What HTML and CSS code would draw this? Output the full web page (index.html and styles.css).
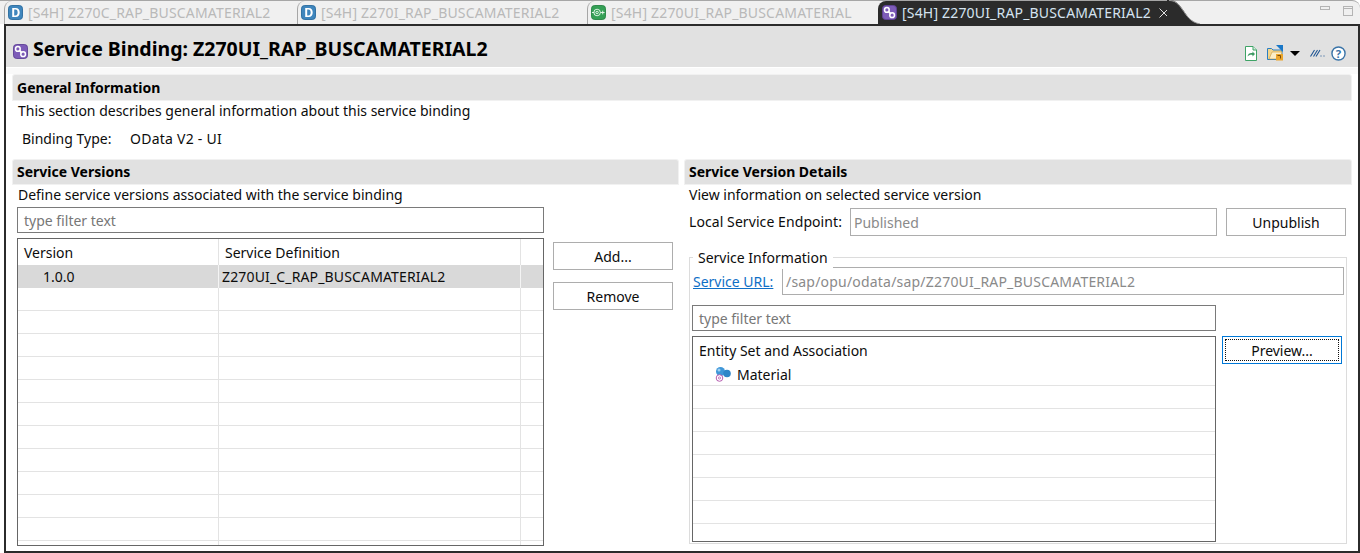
FILE: index.html
```html
<!DOCTYPE html>
<html lang="en">
<head>
<meta charset="utf-8">
<title>Service Binding</title>
<link rel="stylesheet" href="styles.css">
</head>
<body>
<svg class="defs" width="0" height="0" aria-hidden="true">
  <symbol id="i-binding" viewBox="0 0 16 16">
    <rect x=".5" y=".5" width="15" height="15" rx="3.5" fill="#7d5cb8" stroke="#5f4296"/>
    <g fill="none" stroke="#fff" stroke-width="1.6">
      <circle cx="5.200" cy="5.200" r="2.500"/><circle cx="10.800" cy="10.800" r="2.500"/>
      <path d="M6.600 6.600l2.800 2.800" stroke-width="2"/>
    </g>
  </symbol>
  <symbol id="i-ddl" viewBox="0 0 16 16">
    <rect x=".5" y=".5" width="15" height="15" rx="3.5" fill="#3f86bd" stroke="#2b6c9f"/>
    <path d="M4.500 3.200h3.600c3 0 4.400 1.900 4.400 4.800s-1.400 4.800-4.400 4.800H4.500zM6.600 4.900v6.200h1.400c1.600 0 2.300-1.200 2.300-3.100S9.600 4.900 8 4.900z" fill="#fff"/>
  </symbol>
  <symbol id="i-def" viewBox="0 0 16 16">
    <rect x=".5" y=".5" width="15" height="15" rx="3.5" fill="#35a056" stroke="#2a8445"/>
    <g fill="none" stroke="#e8f6ec">
      <circle cx="6.500" cy="8" r="3.500"/><circle cx="6.500" cy="8" r="1.300"/>
      <path d="M1 8h2.500M10 8h4.500M12.500 6v4"/>
    </g>
  </symbol>
</svg>

<div class="app">
  <nav class="tabbar">
    <div class="tab tab-one"><svg class="tab-icon"><use href="#i-ddl"/></svg><span>[S4H] Z270C_RAP_BUSCAMATERIAL2</span></div>
    <div class="tab tab-two"><svg class="tab-icon"><use href="#i-ddl"/></svg><span>[S4H] Z270I_RAP_BUSCAMATERIAL2</span></div>
    <div class="tab tab-three"><svg class="tab-icon"><use href="#i-def"/></svg><span>[S4H] Z270UI_RAP_BUSCAMATERIAL</span></div>
    <div class="tab tab-active"><svg class="tab-icon"><use href="#i-binding"/></svg><span>[S4H] Z270UI_RAP_BUSCAMATERIAL2</span>
      <svg class="close" viewBox="0 0 10 10"><path d="M.5.500l9 9M9.500.500l-9 9" fill="none" stroke="#e0e0e0"/></svg>
    </div>
    <svg class="tab-curve" viewBox="0 0 33 25"><path d="M0 0h2c6 0 9 3 13 8.500 5 7 8 13.500 18 15.500v1H0z" fill="#2b2b2b"/><path d="M2 .5c6 0 9 3 13 8.500 5 7 8 13 18 15" fill="none" stroke="#9a9a9a"/></svg>
    <div class="win-controls">
      <svg class="win-min" viewBox="0 0 10 4"><rect x=".5" y=".5" width="9" height="3" fill="#f0f0f0" stroke="#b4b4b4"/></svg>
      <svg class="win-max" viewBox="0 0 10 10"><rect x=".5" y=".5" width="9" height="9" fill="#f0f0f0" stroke="#b4b4b4"/><path d="M1 2.500h8" stroke="#b4b4b4"/></svg>
    </div>
  </nav>

  <main class="frame">
    <header class="form-head">
      <svg class="title-icon"><use href="#i-binding"/></svg>
      <h1>Service Binding: Z270UI_RAP_BUSCAMATERIAL2</h1>
      <div class="tools">
        <svg class="t-doc" viewBox="0 0 12 15"><path d="M.5.500h7.500l3.500 3.500v10.500h-11z" fill="#fff" stroke="#3fa366"/><path d="M8 .5v3.500h3.500" fill="#d9efe0" stroke="#3fa366"/><path d="M2.500 10.500c.5-3 2.500-4 5-3.500V5.500l2.500 2.500-2.500 2.500V9c-2-.5-3.500 0-5 1.500z" fill="#3c9a63"/></svg>
        <svg class="t-folder" viewBox="0 0 16 16"><path d="M.5 3.500h4l1.500 1.500h9v9.500H.5z" fill="#f4d58a" stroke="#2a7ec4"/><path d="M2 14l3-7h10l-2 7z" fill="#fbeec6" stroke="#c99a3a" stroke-width=".6"/><path d="M9 0h7v7z" fill="#1a78c8"/><rect x="9" y="9" width="7" height="6.500" fill="#eba62c"/><path d="M10.500 10.500h3v3" fill="none" stroke="#7a4c08"/></svg>
        <span class="t-caret"></span>
        <svg class="t-link" viewBox="0 0 15 8"><path d="M.5 7.500l4-6.500M3.500 7.500l4-6.500M6 7.500l4-6.500" fill="none" stroke="#1f5593" stroke-width="1.100"/><path d="M10.500 6.500h1v1h-1zM13.500 6.500h1v1h-1z" fill="#1f5593"/></svg>
        <svg class="t-help" viewBox="0 0 16 16"><circle cx="8" cy="8" r="7" fill="#fff" stroke="#3a74a8" stroke-width="1.500"/><text x="8" y="12.500" text-anchor="middle" class="help-mark">?</text></svg>
      </div>
    </header>

    <div class="form-body">
      <section class="sec">
        <h2 class="sec-head sec-head-general">General Information</h2>
        <p class="desc">This section describes general information about this service binding</p>
        <div class="binding"><span class="binding-label">Binding Type:</span><span class="binding-value">OData V2 - UI</span></div>
      </section>

      <div class="columns">
        <section class="sec">
          <h2 class="sec-head">Service Versions</h2>
          <p class="desc">Define service versions associated with the service binding</p>
          <div class="versions">
            <div class="versions-main">
              <div class="filter">type filter text</div>
              <div class="table">
                <div class="tr th"><div class="cell c-version">Version</div><div class="cell c-def">Service Definition</div><div class="cell"></div></div>
                <div class="tr selected"><div class="cell c-num">1.0.0</div><div class="cell c-val">Z270UI_C_RAP_BUSCAMATERIAL2</div><div class="cell"></div></div>
                <div class="tr"><div class="cell"></div><div class="cell"></div><div class="cell"></div></div>
                <div class="tr"><div class="cell"></div><div class="cell"></div><div class="cell"></div></div>
                <div class="tr"><div class="cell"></div><div class="cell"></div><div class="cell"></div></div>
                <div class="tr"><div class="cell"></div><div class="cell"></div><div class="cell"></div></div>
                <div class="tr"><div class="cell"></div><div class="cell"></div><div class="cell"></div></div>
                <div class="tr"><div class="cell"></div><div class="cell"></div><div class="cell"></div></div>
                <div class="tr"><div class="cell"></div><div class="cell"></div><div class="cell"></div></div>
                <div class="tr"><div class="cell"></div><div class="cell"></div><div class="cell"></div></div>
                <div class="tr"><div class="cell"></div><div class="cell"></div><div class="cell"></div></div>
                <div class="tr"><div class="cell"></div><div class="cell"></div><div class="cell"></div></div>
                <div class="tr"><div class="cell"></div><div class="cell"></div><div class="cell"></div></div>
                <div class="tr"><div class="cell"></div><div class="cell"></div><div class="cell"></div></div>
              </div>
            </div>
            <div class="versions-btns">
              <button class="btn">Add...</button>
              <button class="btn">Remove</button>
            </div>
          </div>
        </section>

        <section class="sec">
          <h2 class="sec-head">Service Version Details</h2>
          <p class="desc desc-right">View information on selected service version</p>
          <div class="endpoint">
            <label class="endpoint-label">Local Service Endpoint:</label>
            <div class="ro ro-endpoint">Published</div>
            <button class="btn">Unpublish</button>
          </div>
          <div class="group">
            <div class="legend">Service Information</div>
            <div class="url-row">
              <a class="link" href="#">Service URL:</a>
              <div class="ro ro-url">/sap/opu/odata/sap/Z270UI_RAP_BUSCAMATERIAL2</div>
            </div>
            <div class="entity">
              <div class="entity-main">
                <div class="filter">type filter text</div>
                <div class="tree">
                  <div class="tree-root">Entity Set and Association</div>
                  <div class="tree-row tree-item">
                    <svg class="entity-icon" viewBox="0 0 16 15"><circle cx="5.500" cy="4.500" r="4.500" fill="#3f97d8"/><circle cx="12" cy="6.500" r="3.800" fill="#2f86c8"/><circle cx="4" cy="3" r="1.500" fill="#9fd0f2"/><circle cx="4.500" cy="11" r="3.300" fill="#fff" stroke="#b65cb0"/><circle cx="4.500" cy="11" r="1.100" fill="none" stroke="#b65cb0" stroke-width=".8"/></svg>
                    <span>Material</span>
                  </div>
                  <div class="tree-row"></div><div class="tree-row"></div><div class="tree-row"></div><div class="tree-row"></div><div class="tree-row"></div><div class="tree-row"></div><div class="tree-row"></div>
                </div>
              </div>
              <button class="btn btn-focus"><span>Preview...</span></button>
            </div>
          </div>
        </section>
      </div>
    </div>
  </main>
</div>
</body>
</html>
```

FILE: styles.css
```css
* { box-sizing: border-box; }
html, body { margin: 0; padding: 0; height: 100%; overflow: hidden; background: #fff; }
body { font: 14px/22px "Noto Sans", "Liberation Sans", sans-serif; color: #0c0c0c; }
.defs { position: absolute; }

.app { display: flex; flex-direction: column; width: 1360px; height: 553px; }

/* tab strip */
.tabbar { display: flex; height: 24px; flex: none; padding-left: 4px; background: #f0f0f0; border-top: 1px solid #a6a6a6; border-top-right-radius: 8px; }
.tab { display: flex; align-items: center; height: 23px; padding-left: 3px; color: #b9b9b9; letter-spacing: .18px; border-left: 1px solid #a6a6a6; border-top-left-radius: 8px; white-space: nowrap; }
.tab-one { width: 293px; }
.tab-two { width: 290px; }
.tab-three { width: 291px; }
.tab-icon { width: 15px; height: 15px; margin-right: 5px; flex: none; }
.tab-active { width: 289px; color: #d5e3f0; background: #2b2b2b; border-left: 0; padding-left: 4px; }
.close { width: 10px; height: 10px; margin-left: 8px; flex: none; }
.tab-curve { width: 33px; height: 25px; flex: none; margin-top: -1px; }
.win-controls { display: flex; margin-left: auto; padding: 5px 7px 0 0; gap: 13px; }
.win-min { width: 10px; height: 4px; }
.win-max { width: 10px; height: 10px; }

/* editor frame */
.frame { flex: 1; margin-left: 4px; border: 2px solid #2b2b2b; display: flex; flex-direction: column; min-height: 0; overflow: hidden; }
.form-head { display: flex; align-items: center; height: 41px; flex: none; padding: 2px 12px 0 7px; background: #e1e1e1; }
.title-icon { width: 15px; height: 15px; margin: 8px 5px 0 0; flex: none; }
h1 { margin: 2px 0 0; font-size: 19.5px; font-weight: 700; line-height: 26px; color: #000; }
.tools { display: flex; align-items: center; margin-left: auto; padding-top: 11px; }
.t-doc { width: 12px; height: 15px; }
.t-folder { width: 16px; height: 16px; margin-left: 10px; }
.t-caret { width: 0; height: 0; margin-left: 7px; border: 5px solid transparent; border-top: 5px solid #000; border-bottom: 0; }
.t-link { width: 15px; height: 8px; margin-left: 10px; }
.t-help { width: 15px; height: 15px; margin-left: 6px; }
.help-mark { font: 700 12px "Noto Sans", sans-serif; fill: #3a74a8; }

.form-body { flex: 1; min-height: 0; padding: 7px 7px 0; border-top: 1px solid #fff; background: linear-gradient(#f9f9f9 0 6px, #fff 6px); }
.sec-head { margin: 0; height: 24px; padding-left: 4px; font-size: 14px; font-weight: 700; line-height: 24px; color: #000; background: #e1e1e1; box-shadow: 0 0 0 1px #f1f1f1; border-radius: 2px 2px 0 0; }
.sec-head-general { height: 25px; line-height: 25px; }
.desc { margin: 0; padding-left: 5px; height: 22px; }
.desc-right { padding-left: 4px; }
.binding { display: flex; height: 22px; margin-top: 6px; padding-left: 9px; }
.binding-label { width: 108px; }
.binding-value { letter-spacing: .25px; }

.columns { display: grid; grid-template-columns: 665px 666px; column-gap: 7px; margin-top: 10px; }

/* left */
.versions { display: flex; gap: 9px; padding-left: 4px; margin-top: 1px; }
.versions-main { width: 527px; flex: none; }
.filter { height: 26px; padding-left: 6px; line-height: 25px; color: #777; border: 1px solid #7a7a7a; background: #fff; }
.table { height: 308px; margin-top: 5px; overflow: hidden; border: 1px solid #666; }
.tr { display: grid; grid-template-columns: 201px 302px 1fr; height: 23px; border-bottom: 1px solid #e3e3e3; }
.cell { height: 100%; border-right: 1px solid #e3e3e3; line-height: 22px; white-space: nowrap; }
.cell:last-child { border-right: 0; }
.th { height: 26px; border-bottom: 0; }
.th .cell { line-height: 27px; }
.c-version { padding-left: 6px; }
.c-def { padding-left: 6px; }
.c-num { padding-left: 25px; }
.c-val { padding-left: 3px; letter-spacing: .15px; }
.selected { background: #d9d9d9; border-bottom: 0; }
.selected .cell { border-right-color: #f4f4f4; line-height: 24px; }
.versions-btns { display: flex; flex-direction: column; gap: 12px; padding-top: 35px; width: 120px; }

.btn { display: block; width: 120px; height: 28px; padding: 1px 0 0; font: inherit; color: #0c0c0c; background: #fff; border: 1px solid #adadad; }

/* right */
.endpoint { display: flex; align-items: center; margin-top: 2px; padding-left: 4px; height: 28px; }
.endpoint-label { width: 161px; flex: none; letter-spacing: .08px; }
.ro { height: 28px; padding-left: 3px; line-height: 27px; color: #8a8a8a; border: 1px solid #adadad; background: #fff; }
.ro-endpoint { width: 367px; }
.endpoint .btn { margin-left: 9px; }
.group { position: relative; height: 287px; margin: 21px 4px 0 4px; padding: 9px 2px 0 3px; border: 1px solid #dcdcdc; }
.legend { position: absolute; left: 3px; top: -11px; height: 22px; padding: 0 5px; background: #fff; }
.url-row { display: flex; align-items: center; height: 28px; }
.link { width: 89px; flex: none; padding-top: 1px; color: #0f6fc6; text-decoration: underline; }
.ro-url { flex: 1; letter-spacing: .2px; }
.entity { display: flex; gap: 6px; margin-top: 10px; margin-left: -1px; }
.entity-main { width: 524px; flex: none; }
.tree { height: 206px; margin-top: 5px; overflow: hidden; border: 1px solid #666; }
.tree-root { height: 26px; padding-left: 6px; line-height: 28px; }
.tree-row { display: flex; align-items: center; height: 23px; border-bottom: 1px solid #e3e3e3; }
.tree-item { padding-left: 22px; }
.tree-item span { padding-top: 1px; }
.entity-icon { width: 16px; height: 15px; margin-right: 6px; }
.btn-focus { height: 28px; margin-top: 31px; padding: 2px; border: 1px solid #0078d7; }
.btn-focus span { display: block; height: 100%; line-height: 21px; border: 1px dotted #111; }
```
